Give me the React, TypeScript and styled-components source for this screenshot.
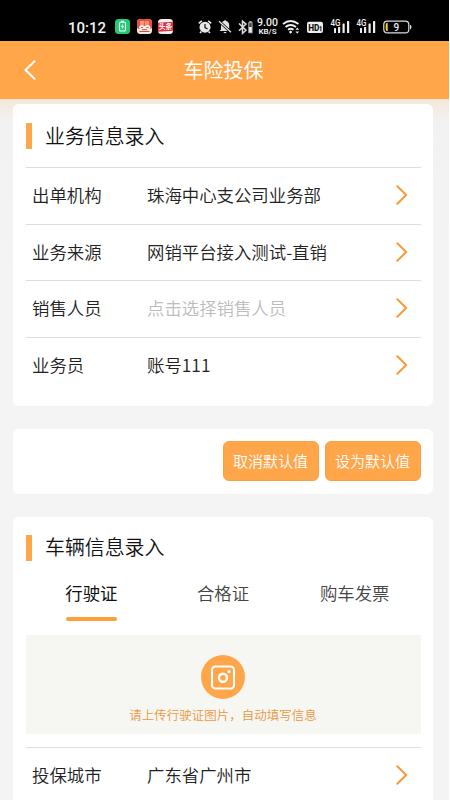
import React from 'react';
import styled, { createGlobalStyle } from 'styled-components';

const ORANGE = '#ffa54a';

const GlobalStyle = createGlobalStyle`
  * { box-sizing: border-box; }
  body { margin: 0; background: #fff; }
`;

const Screen = styled.div`
  width: 449px;
  height: 800px;
  overflow: hidden;
  display: flex;
  flex-direction: column;
  background: #f4f4f4;
  color: #222;
  font-family: 'Noto Sans CJK SC', sans-serif;
  font-size: 17.4px;
  font-weight: 350;
`;

const StatusBar = styled.div`
  flex: none;
  height: 41px;
  padding: 14px 0 0 68px;
  display: flex;
  align-items: flex-start;
  background: #000;
  color: #f2f2f2;
  font-family: Roboto, sans-serif;
`;

const Clock = styled.div`
  width: 46px;
  font-size: 15px;
  font-weight: 500;
  line-height: 28px;
  height: 26px;
`;

const StatusIcon = styled.svg<{ $gap?: number }>`
  display: block;
  flex: none;
  height: 26px;
  margin-left: ${p => p.$gap ?? 0}px;
  overflow: visible;
`;

const Speed = styled.div`
  width: 24px;
  margin-left: 3px;
  padding-top: 4px;
  display: flex;
  flex-direction: column;
  align-items: center;
  font-weight: 500;
  white-space: nowrap;
`;

const SpeedValue = styled.div`
  font-size: 10.5px;
  line-height: 9px;
`;

const SpeedUnit = styled.div`
  font-size: 8px;
  font-weight: 600;
  line-height: 9px;
`;

const Header = styled.header`
  flex: none;
  height: 58px;
  display: grid;
  grid-template-columns: 60px 1fr 60px;
  align-items: center;
  background: ${ORANGE};
  color: #fff;
`;

const BackButton = styled.button`
  margin: 0 0 0 24px;
  padding: 0;
  width: 12px;
  height: 20px;
  border: 0;
  background: none;
  color: inherit;
`;

const PageTitle = styled.h1`
  margin: 0 0 0 -2px;
  text-align: center;
  font-size: 20px;
  line-height: 28px;
  font-weight: 400;
`;

const Content = styled.main`
  flex: 1;
  min-height: 0;
  padding: 5px 16px 0 13px;
  display: flex;
  flex-direction: column;
  background: linear-gradient(#f4e7d8 0, #f5ebe2 9px, #f3f0ed 18px, #f2f2f2 25px, #f4f4f4 180px);
`;

const Card = styled.section<{ $height: number }>`
  flex: none;
  height: ${p => p.$height}px;
  margin-bottom: 22.5px;
  padding: 0 12.5px;
  border-radius: 6px;
  background: #fff;
`;

const SectionTitle = styled.h2<{ $height: number }>`
  height: ${p => p.$height}px;
  margin: 0;
  display: flex;
  align-items: center;
  gap: 13px;
  color: #111;
  font-size: 19.9px;
  line-height: 26px;
  font-weight: inherit;

  &::before {
    content: '';
    width: 6.5px;
    height: 25.5px;
    margin-top: 1px;
    background: ${ORANGE};
  }
`;

const FieldRow = styled.div`
  height: 56.5px;
  padding: 0 12.5px 1px 6.5px;
  display: grid;
  grid-template-columns: 115px 1fr 12px;
  align-items: center;
  border-top: 1px solid #dedede;
  line-height: 26px;
`;

const FieldValue = styled.span<{ $placeholder?: boolean }>`
  color: ${p => (p.$placeholder ? '#bdbdbd' : 'inherit')};
  white-space: nowrap;
`;

const ActionCard = styled(Card)`
  display: flex;
  align-items: center;
  justify-content: flex-end;
  gap: 6px;
`;

const ActionButton = styled.button`
  width: 96px;
  height: 40px;
  padding: 0;
  border: 1px solid #fba143;
  border-radius: 6px;
  background: ${ORANGE};
  color: #fff;
  font: 350 15px/22px 'Noto Sans CJK SC', sans-serif;
`;

const Tabs = styled.nav`
  height: 57px;
  display: grid;
  grid-template-columns: repeat(3, 131.7px);
`;

const Tab = styled.div<{ $active?: boolean }>`
  display: flex;
  flex-direction: column;
  align-items: center;
  gap: 11px;
  padding-top: 2px;
  line-height: 26px;
  color: ${p => (p.$active ? '#111' : '#444')};
  font-weight: ${p => (p.$active ? 400 : 'inherit')};

  &::after {
    content: '';
    width: 51px;
    height: 4px;
    border-radius: 2px;
    background: ${p => (p.$active ? '#ffa03a' : 'transparent')};
  }
`;

const UploadArea = styled.div`
  height: 99px;
  margin-bottom: 12.5px;
  padding-top: 19.5px;
  display: flex;
  flex-direction: column;
  align-items: center;
  background: #f6f6f2;
  color: #e9983f;
  font-size: 12.5px;
  line-height: 18px;
`;

const CameraBadge = styled.div`
  width: 44px;
  height: 44px;
  flex: none;
  margin-bottom: 7px;
  border-radius: 50%;
  background: ${ORANGE};
`;

const Chevron = () => (
  <svg width="12" height="20" viewBox="0 0 12 20" fill="none" stroke="#f79a3c" strokeWidth="2" strokeLinecap="round" strokeLinejoin="round">
    <path d="M1.3 1.2 10.2 10 1.3 18.8" />
  </svg>
);

const Signal = ({ gap }: { gap: number }) => (
  <StatusIcon $gap={gap} width="20" viewBox="0 0 20 26" fill="#eee">
    <text x="-.6" y="12" fontSize="8.8" fontWeight="500" fontFamily="Roboto, sans-serif" textLength="10" lengthAdjust="spacingAndGlyphs">4G</text>
    <rect x="3" y="14" width="2" height="5" rx=".5" />
    <rect x="7" y="13" width="2.2" height="6" rx=".5" />
    <rect x="11.5" y="9.5" width="2.2" height="9.5" rx=".5" />
    <rect x="16" y="7" width="2.2" height="12" rx=".5" />
  </StatusIcon>
);

type FieldProps = { label: string; value: string; placeholder?: boolean };

const Field = ({ label, value, placeholder }: FieldProps) => (
  <FieldRow>
    <span>{label}</span>
    <FieldValue $placeholder={placeholder}>{value}</FieldValue>
    <Chevron />
  </FieldRow>
);

const StatusIcons = () => (
  <>
    <StatusIcon $gap={1} width="15" viewBox="0 0 15 26">
      <rect x="0" y="5" width="15" height="15" rx="3.5" fill="#23cb79" />
      <rect x="4.5" y="8.3" width="6" height="8.7" rx="1" fill="none" stroke="#fff" strokeWidth="1.1" />
      <path d="M6 6.7h3v1H6zM8 9.8 5.9 13h1.5L7 15.5 9.1 12.2H7.7z" fill="#fff" />
    </StatusIcon>
    <StatusIcon $gap={6.5} width="15" viewBox="0 0 15 26">
      <rect y="5" width="15" height="15" rx="3.5" fill="#f6e7dc" />
      <path d="M0 14V8.5Q0 5 3.5 5h8Q15 5 15 8.5V14l-2 1H2z" fill="#e94d3c" />
      <path d="M3.5 7h8v4h-8z" fill="#fbd5b5" />
      <path d="M4.5 8h2m1.5 0h3M4.2 10h2.5m1 0h3.5M7.3 7v4" stroke="#d92727" strokeWidth=".8" />
      <path d="M2 14q0-3 3-3 1 0 2.5 1Q9 11 10.5 11q3 0 3 3l-2 2H4z" fill="#fff0e7" />
      <path d="M4 13.6h2m3.5 0h2M2.5 17.5h10M5 15.7h5" stroke="#b95443" strokeWidth="1" />
    </StatusIcon>
    <StatusIcon $gap={6.5} width="15" viewBox="0 0 15 26">
      <rect y="5" width="15" height="15" rx="3.5" fill="#f5eeee" />
      <path d="M0 8.7 15 7.8v9L0 17.7z" fill="#e52d3b" />
      <text x="7.5" y="15.3" textAnchor="middle" fontSize="6.8" fontWeight="700" fill="#fff" fontFamily="'Noto Sans CJK SC', sans-serif">头条</text>
    </StatusIcon>
    <StatusIcon $gap={24.5} width="14" viewBox="0 0 14 26" fill="none">
      <circle cx="7" cy="13.2" r="5.5" fill="#e8e8e8" />
      <path d="M.8 9.3 3.8 6.8M10.2 6.8l3 2.5M3.4 17.5 2 19m8.6-1.5L12 19" stroke="#e8e8e8" strokeWidth="1.7" />
      <path d="M7 10v3.7l2.5 1.2" stroke="#222" strokeWidth="1.3" />
    </StatusIcon>
    <StatusIcon $gap={6} width="14" viewBox="0 0 14 26">
      <path d="M1.6 17 3 15.5v-4.2Q3 7.7 6 7q1-2 2 0 3.2.8 3.2 4.3v4.2l1.4 1.5zM5.3 17.9h3.4q-1.7 2.6-3.4 0" fill="#e2e2e2" />
      <path d="m1 7.2 12 11" stroke="#000" strokeWidth="2.7" />
      <path d="m1 7.2 12 11" stroke="#e2e2e2" strokeWidth="1.3" />
    </StatusIcon>
    <StatusIcon $gap={6} width="15" viewBox="0 0 15 26">
      <path d="m1 9.5 7 6.8-3.5 3V7.2L8 10.1l-7 6.7" fill="none" stroke="#ddd" strokeWidth="1.5" />
      <path d="M11.2 7h2.4v1.2h1v11h-4.4v-11h1z" fill="#aaa" />
      <path d="M11.2 9.2h2.4v3.8h-2.4z" fill="#444" />
      <path d="M11.2 13h2.4v5.2h-2.4z" fill="#eee" />
    </StatusIcon>
    <Speed>
      <SpeedValue>9.00</SpeedValue>
      <SpeedUnit>KB/S</SpeedUnit>
    </Speed>
    <StatusIcon $gap={2.5} width="19" viewBox="0 0 19 26" fill="none" stroke="#eee" strokeWidth="1.9">
      <path d="M1 10q7.5-6 15.5 0M3.5 13q5.2-4 10.5 0M6 15.8q2.7-2 5.5 0" />
      <path d="m8.6 16.5 1.8 1.5-1.8 1.7-1.8-1.7z" fill="#eee" stroke="none" />
      <path d="M13.5 15.8 15.3 13.6l1.8 2.2zm0 1.8h3.6l-1.8 2.2z" fill="#eee" stroke="none" />
    </StatusIcon>
    <StatusIcon $gap={6} width="16" viewBox="0 0 16 26">
      <rect y="7.8" width="16" height="11.2" rx="2" fill="#eee" />
      <text x="1.2" y="16.5" fontSize="8.3" fontWeight="800" fill="#111" fontFamily="Roboto, sans-serif">HD</text>
      <path d="m12.7 13.3 1.2-.8v4.7" stroke="#111" strokeWidth="1" fill="none" />
    </StatusIcon>
    <Signal gap={8} />
    <Signal gap={6} />
    <StatusIcon $gap={6} width="29" viewBox="0 0 29 26">
      <rect x=".8" y="7.1" width="25" height="11.8" rx="3.5" fill="none" stroke="#ddd" strokeWidth="1.2" />
      <path d="M27 10.8q1.5.2 1.5 2.2T27 15.4z" fill="#ddd" />
      <path d="M4.7 8.8v8.4q-2 0-2-2v-4.4q0-2 2-2" fill="#f7d52b" />
      <text x="13.3" y="16.5" textAnchor="middle" fontSize="10" fontWeight="500" fill="#eee" fontFamily="Roboto, sans-serif">9</text>
    </StatusIcon>
  </>
);

export default function App() {
  return (
    <>
      <GlobalStyle />
      <Screen>
        <StatusBar>
          <Clock>10:12</Clock>
          <StatusIcons />
        </StatusBar>
        <Header>
          <BackButton aria-label="返回">
            <svg width="12" height="20" viewBox="0 0 12 20" fill="none" stroke="currentColor" strokeWidth="2" strokeLinecap="round" strokeLinejoin="round">
              <path d="M10.5 1.2 1.5 10l9 8.8" />
            </svg>
          </BackButton>
          <PageTitle>车险投保</PageTitle>
        </Header>
        <Content>
          <Card $height={302}>
            <SectionTitle $height={63}>业务信息录入</SectionTitle>
            <Field label="出单机构" value="珠海中心支公司业务部" />
            <Field label="业务来源" value="网销平台接入测试-直销" />
            <Field label="销售人员" value="点击选择销售人员" placeholder />
            <Field label="业务员" value="账号111" />
          </Card>
          <ActionCard $height={65.5}>
            <ActionButton>取消默认值</ActionButton>
            <ActionButton>设为默认值</ActionButton>
          </ActionCard>
          <Card $height={320}>
            <SectionTitle $height={61.5}>车辆信息录入</SectionTitle>
            <Tabs>
              <Tab $active>行驶证</Tab>
              <Tab>合格证</Tab>
              <Tab>购车发票</Tab>
            </Tabs>
            <UploadArea>
              <CameraBadge>
                <svg width="44" height="44" viewBox="0 0 44 44" fill="none" stroke="#fff" strokeWidth="2.1">
                  <rect x="11" y="11.5" width="22" height="22" rx="3.3" />
                  <circle cx="22" cy="22.7" r="4" strokeWidth="2.4" />
                  <circle cx="28" cy="16.7" r="1.6" fill="#fff" stroke="none" />
                </svg>
              </CameraBadge>
              请上传行驶证图片，自动填写信息
            </UploadArea>
            <Field label="投保城市" value="广东省广州市" />
          </Card>
        </Content>
      </Screen>
    </>
  );
}
